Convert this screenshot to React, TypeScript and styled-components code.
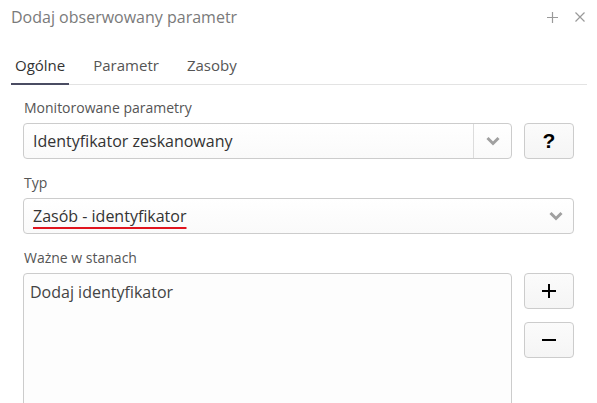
import React from "react";
import styled, { createGlobalStyle } from "styled-components";

const FONT = `"Open Sans", "Noto Sans", "Liberation Sans", sans-serif`;
const BORDER = `#cccccc`;

const GlobalStyle = createGlobalStyle`
  html, body {
    margin: 0;
    padding: 0;
    background: #ffffff;
    font-family: ${FONT};
  }
`;

const Dialog = styled.div`
  width: 597px;
  height: 403px;
  overflow: hidden;
  background: #fff;
`;

const Header = styled.div`
  height: 34px;
  display: flex;
  align-items: center;
  padding: 0 10px 0 11px;
`;

const Title = styled.div`
  flex: 1;
  font-size: 16px;
  color: #7a7a7a;
`;

const HeaderIcons = styled.div`
  display: flex;
  align-items: center;
  gap: 17px;
  margin-right: 2px;
  color: #9a9a9a;
`;

const TabBar = styled.div`
  display: flex;
  gap: 20px;
  margin: 14px 10px 0 11px;
  border-bottom: 1px solid #e3e3e3;
`;

const Tab = styled.div<{ $active?: boolean }>`
  height: 35px;
  line-height: 35px;
  padding: 0 4px;
  font-size: 15px;
  color: ${(p) => (p.$active ? "#333" : "#555")};
  border-bottom: 2px solid ${(p) => (p.$active ? "#4a4c62" : "transparent")};
  margin-bottom: -1px;
`;

const Body = styled.div`
  padding: 13px 23px 0 23px;
`;

const Field = styled.div`
  margin-bottom: 14px;
`;

const Label = styled.div`
  height: 20px;
  line-height: 20px;
  margin: 0 0 5px 1px;
  font-size: 14px;
  color: #555;
`;

const Row = styled.div`
  display: flex;
  align-items: flex-start;
  gap: 12px;
`;

const Select = styled.div`
  flex: 1;
  height: 36px;
  box-sizing: border-box;
  display: flex;
  align-items: center;
  border: 1px solid ${BORDER};
  border-radius: 4px;
  background: linear-gradient(#ffffff, #fafafa);
`;

const SelectText = styled.div`
  flex: 1;
  padding-left: 9px;
  font-size: 16px;
  color: #333;
`;

const Marked = styled.span`
  text-decoration: underline;
  text-decoration-color: #e0141e;
  text-decoration-thickness: 2px;
  text-underline-offset: 5px;
`;

const Arrow = styled.div<{ $divided?: boolean }>`
  width: ${(p) => (p.$divided ? "37px" : "34px")};
  height: 100%;
  display: flex;
  align-items: center;
  justify-content: center;
  border-left: ${(p) => (p.$divided ? `1px solid #dcdcdc` : "none")};
  color: #a0a0a0;
`;

const SideColumn = styled.div`
  display: flex;
  flex-direction: column;
  gap: 13px;
`;

const SideButton = styled.div`
  width: 50px;
  height: 36px;
  box-sizing: border-box;
  display: flex;
  align-items: center;
  justify-content: center;
  border: 1px solid ${BORDER};
  border-radius: 4px;
  background: linear-gradient(#fbfbfb, #f5f5f5);
  font-family: "Liberation Sans", Arial, sans-serif;
  font-size: 21px;
  font-weight: 700;
  color: #000;
`;

const TextArea = styled.div`
  flex: 1;
  height: 160px;
  box-sizing: border-box;
  padding: 7px 6px;
  border: 1px solid ${BORDER};
  border-radius: 4px;
  background: #fdfdfd;
  font-size: 16px;
  color: #444;
`;

const Chevron = () => (
  <svg width="14" height="10" viewBox="0 0 14 10">
    <path d="M1.5 2 L7 7.5 L12.5 2" fill="none" stroke="currentColor" strokeWidth="3" />
  </svg>
);

const PlusIcon = ({ size, stroke }: { size: number; stroke: number }) => (
  <svg width={size} height={size} viewBox={`0 0 ${size} ${size}`}>
    <path d={`M${size / 2} 0 V${size} M0 ${size / 2} H${size}`} stroke="currentColor" strokeWidth={stroke} />
  </svg>
);

const MinusIcon = () => (
  <svg width="14" height="14" viewBox="0 0 14 14">
    <path d="M0 7 H14" stroke="currentColor" strokeWidth="2" />
  </svg>
);

const CloseIcon = () => (
  <svg width="10" height="10" viewBox="0 0 10 10">
    <path d="M0.5 0.5 L9.5 9.5 M9.5 0.5 L0.5 9.5" stroke="currentColor" strokeWidth="1.2" />
  </svg>
);

const App: React.FC = () => {
  return (
    <Dialog>
      <GlobalStyle />
      <Header>
        <Title>Dodaj obserwowany parametr</Title>
        <HeaderIcons>
          <PlusIcon size={11} stroke={1.2} />
          <CloseIcon />
        </HeaderIcons>
      </Header>
      <TabBar>
        <Tab $active>Ogólne</Tab>
        <Tab>Parametr</Tab>
        <Tab>Zasoby</Tab>
      </TabBar>
      <Body>
        <Field>
          <Label>Monitorowane parametry</Label>
          <Row>
            <Select>
              <SelectText>Identyfikator zeskanowany</SelectText>
              <Arrow $divided>
                <Chevron />
              </Arrow>
            </Select>
            <SideButton>?</SideButton>
          </Row>
        </Field>
        <Field>
          <Label>Typ</Label>
          <Select>
            <SelectText>
              <Marked>Zasób - identyfikator</Marked>
            </SelectText>
            <Arrow>
              <Chevron />
            </Arrow>
          </Select>
        </Field>
        <Field>
          <Label>Ważne w stanach</Label>
          <Row>
            <TextArea>Dodaj identyfikator</TextArea>
            <SideColumn>
              <SideButton>
                <PlusIcon size={14} stroke={2} />
              </SideButton>
              <SideButton>
                <MinusIcon />
              </SideButton>
            </SideColumn>
          </Row>
        </Field>
      </Body>
    </Dialog>
  );
};

export default App;
